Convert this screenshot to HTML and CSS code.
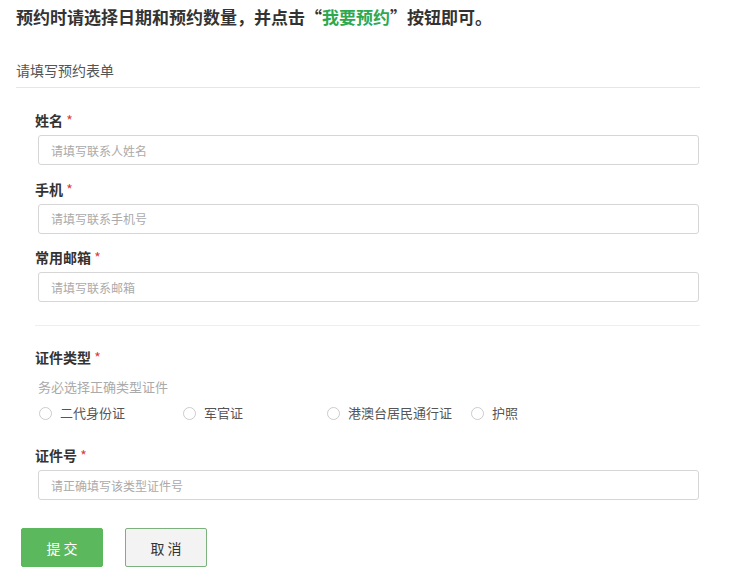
FILE: index.html
```html
<!DOCTYPE html>
<html lang="zh-CN">
<head>
    <meta charset="UTF-8">
    <meta name="viewport" content="width=device-width, initial-scale=1.0">
    <title>预约</title>
<link rel="stylesheet" href="styles.css">
</head>
<body>
    <div class="page">
        <h1 class="notice">预约时请选择日期和预约数量，并点击<span class="quote">“<span class="green">我要预约</span>”</span>按钮即可。</h1>
        <div class="form-head">请填写预约表单</div>
        <form class="form-body">
            <div class="field">
                <label class="field-label">姓名 <span class="star">*</span></label>
                <input class="text-input" type="text" placeholder="请填写联系人姓名">
            </div>
            <div class="field">
                <label class="field-label">手机 <span class="star">*</span></label>
                <input class="text-input" type="text" placeholder="请填写联系手机号">
            </div>
            <div class="field">
                <label class="field-label">常用邮箱 <span class="star">*</span></label>
                <input class="text-input" type="text" placeholder="请填写联系邮箱">
            </div>

            <div class="sep"></div>

            <div class="field id-type">
                <label class="field-label">证件类型 <span class="star">*</span></label>
                <div class="hint">务必选择正确类型证件</div>
                <div class="radio-row">
                    <label class="radio-item"><input type="radio" name="idtype">二代身份证</label>
                    <label class="radio-item"><input type="radio" name="idtype">军官证</label>
                    <label class="radio-item"><input type="radio" name="idtype">港澳台居民通行证</label>
                    <label class="radio-item"><input type="radio" name="idtype">护照</label>
                </div>
            </div>
            <div class="field id-no">
                <label class="field-label">证件号 <span class="star">*</span></label>
                <input class="text-input" type="text" placeholder="请正确填写该类型证件号">
            </div>
        </form>
        <div class="actions">
            <button class="btn btn-submit" type="button">提 交</button>
            <button class="btn btn-cancel" type="button">取 消</button>
        </div>
    </div>
</body>
</html>
```

FILE: styles.css
```css
* {
    margin: 0;
    padding: 0;
    box-sizing: border-box;
}
body {
    font-family: "Noto Sans CJK SC", "Liberation Sans", sans-serif;
    color: #333;
    background: #fff;
}
.page {
    padding: 0 32px 0 16px;
}
.notice {
    font-size: 17px;
    font-weight: bold;
    line-height: 26px;
    margin-top: 4px;
    color: #333;
}
.green {
    color: #2ea84f;
}
.form-head {
    margin-top: 30px;
    font-size: 14px;
    line-height: 20px;
    color: #555;
    padding-bottom: 7px;
    border-bottom: 1px solid #e6e6e6;
}
.form-body {
    padding: 22px 0 0 19px;
}
.field + .field {
    margin-top: 13.5px;
}
.field-label {
    display: block;
    font-size: 14px;
    font-weight: bold;
    line-height: 20px;
    color: #333;
}
.star {
    color: #e03a3a;
    font-weight: normal;
}
.text-input {
    display: block;
    margin: 5px 0 0 3px;
    width: calc(100% - 4px);
    height: 30px;
    border: 1px solid #d6d6d6;
    border-radius: 3px;
    padding: 0 12px;
    font-family: inherit;
    font-size: 12px;
    color: #333;
    outline: none;
}
.text-input::placeholder {
    color: #aaa;
}
.sep {
    margin-top: 23px;
    height: 1px;
    background: #eee;
}
.id-type {
    margin-top: 21px;
}
.hint {
    margin: 10px 0 0 3px;
    font-size: 13px;
    line-height: 20px;
    color: #aaa;
}
.radio-row {
    display: flex;
    margin: 6px 0 0 3px;
}
.radio-item {
    display: flex;
    align-items: center;
    width: 144px;
    font-size: 13px;
    line-height: 20px;
    color: #555;
}
.radio-item input {
    appearance: none;
    width: 13px;
    height: 13px;
    margin: 0 8px 0 1px;
    border: 1px solid #ccc;
    border-radius: 50%;
    background: #fff;
}
.field.id-no {
    margin-top: 22px;
}
.actions {
    display: flex;
    gap: 22px;
    padding-left: 5px;
    margin-top: 28px;
}
.btn {
    width: 82px;
    height: 39px;
    border-radius: 2px;
    font-family: inherit;
    font-size: 14px;
}
.btn-submit {
    background: #5cb85c;
    border: 1px solid #5cb85c;
    color: #fff;
}
.btn-cancel {
    background: #f3f3f3;
    border: 1px solid #7cb07c;
    color: #333;
}
```
